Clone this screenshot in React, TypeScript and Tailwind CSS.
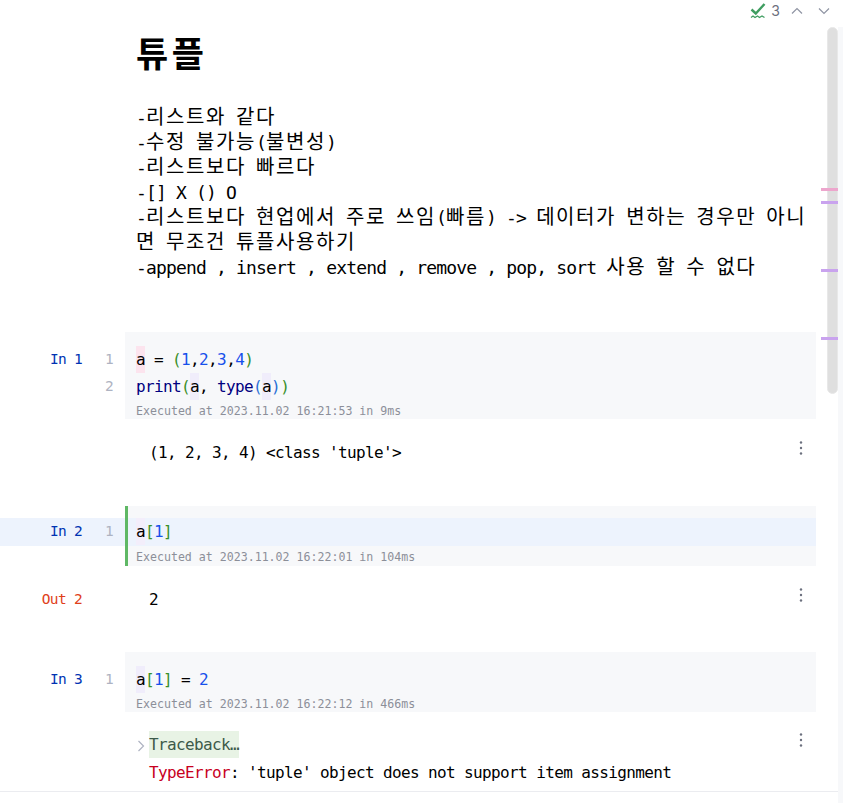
const code = "font-['DejaVu_Sans_Mono','Noto_Sans_CJK_KR',monospace]";
const src = `text-[16px] tracking-[-0.63px] leading-[27px] ${code}`;

function Kebab() {
  return (
    <svg width="4" height="16" viewBox="0 0 4 16" className="block">
      <circle cx="2" cy="2.5" r="1.2" fill="#6c707e" />
      <circle cx="2" cy="8" r="1.2" fill="#6c707e" />
      <circle cx="2" cy="13.5" r="1.2" fill="#6c707e" />
    </svg>
  );
}

function Toolbar() {
  return (
    <div className="h-[27px] flex items-center justify-end pr-[12px] pb-[6px]">
      <svg width="17" height="17" viewBox="0 0 17 17">
        <path d="M1.5 7.5 L5.8 11.5 L14.5 2" fill="none" stroke="#3f9d60" strokeWidth="2.4" />
        <path d="M1 15.5 L3 14 L5 15.5 L7.5 14 L9.5 15.5 L12 14 L14.5 15.5" fill="none" stroke="#3f9d60" strokeWidth="1.2" />
      </svg>
      <span className="ml-[4px] mr-[10px] font-['Inter',sans-serif] text-[14px] text-[#6c707e]">3</span>
      <svg width="14" height="14" viewBox="0 0 14 14" className="mr-[13px]">
        <path d="M2 9.5 L7 4.5 L12 9.5" fill="none" stroke="#8f94a3" strokeWidth="1.2" />
      </svg>
      <svg width="14" height="14" viewBox="0 0 14 14">
        <path d="M2 4.5 L7 9.5 L12 4.5" fill="none" stroke="#8f94a3" strokeWidth="1.2" />
      </svg>
    </div>
  );
}

function Gutter({ label, nums }: { label: string; nums: number[] }) {
  return (
    <div className={`w-[125px] shrink-0 flex text-[14.5px] tracking-[-0.7px] leading-[27px] ${code}`}>
      <span className="w-[82px] text-right text-[#0033b3]">{label}</span>
      <div className="w-[31px] text-right text-[#aeb3c2]">
        {nums.map((n) => (
          <div key={n}>{n}</div>
        ))}
      </div>
    </div>
  );
}

function Executed({ text }: { text: string }) {
  return <div className={`mt-[3px] text-[11.6px] leading-[16px] text-[#8c8f99] ${code}`}>{text}</div>;
}

function Output({ children, className }: { children: React.ReactNode; className?: string }) {
  return (
    <div className={`flex justify-between mr-[27px] ml-[149px] ${className ?? ""}`}>
      <div className={`text-black ${src}`}>{children}</div>
      <div className="mr-[13px] pt-px">
        <Kebab />
      </div>
    </div>
  );
}

const Num = ({ children }: { children: React.ReactNode }) => <span className="text-[#1750eb]">{children}</span>;
const Br = ({ children, c }: { children: React.ReactNode; c: string }) => <span style={{ color: c }}>{children}</span>;
const Hl = ({ children, bg }: { children: React.ReactNode; bg: string }) => (
  <span className="inline-block h-[27px]" style={{ backgroundColor: bg }}>
    {children}
  </span>
);

// hangul takes two latin cells in the notebook font
function Line({ text }: { text: string }) {
  const parts = text.split(/([\uac00-\ud7a3]+)/);
  return (
    <p className="h-[25px] whitespace-nowrap">
      {parts.map((part, i) =>
        i % 2 === 1 ? (
          <span key={i} className="text-[20px] tracking-[1.6px]">
            {part}
          </span>
        ) : (
          <span key={i} className="tracking-[-0.83px]">
            {part}
          </span>
        ),
      )}
    </p>
  );
}

export default function App() {
  const green = "#3a8f2a";
  const blue = "#2a6fd6";
  return (
    <div className="relative w-[843px] h-[803px] overflow-hidden bg-white">
      <Toolbar />

      {/* markdown cell */}
      <div className="ml-[136px] mr-[37px] text-black">
        <h1 className={`h-[46px] mt-[5px] text-[35px] leading-[46px] font-bold tracking-[3.5px] ${code}`}>튜플</h1>
        <div className={`mt-[27px] text-[18px] leading-[25px] ${code}`}>
          <Line text="-리스트와 같다" />
          <Line text="-수정 불가능(불변성)" />
          <Line text="-리스트보다 빠르다" />
          <Line text="-[] X () O" />
          <Line text="-리스트보다 현업에서 주로 쓰임(빠름) -> 데이터가 변하는 경우만 아니" />
          <Line text="면 무조건 튜플사용하기" />
          <Line text="-append , insert , extend , remove , pop, sort 사용 할 수 없다" />
        </div>
      </div>

      {/* cell 1 */}
      <div className="flex mt-[52px] pr-[27px]">
        <div className="pt-[14px]">
          <Gutter label="In 1" nums={[1, 2]} />
        </div>
        <div className="flex-1 bg-[#f7f8fa] pl-[11px] pt-[14px] h-[87px]">
          <div className={`text-black ${src}`}>
            <div className="h-[27px]">
              <Hl bg="#fce4ee">a</Hl> = <Br c={green}>(</Br>
              <Num>1</Num>,<Num>2</Num>,<Num>3</Num>,<Num>4</Num>
              <Br c={green}>)</Br>
            </div>
            <div className="h-[27px]">
              <span className="text-[#000080]">print</span>
              <Br c={green}>(</Br>
              <Hl bg="#f0edfb">a</Hl>, <span className="text-[#000080]">type</span>
              <Br c={blue}>(</Br>
              <Hl bg="#f0edfb">a</Hl>
              <Br c={blue}>)</Br>
              <Br c={green}>)</Br>
            </div>
          </div>
          <Executed text="Executed at 2023.11.02 16:21:53 in 9ms" />
        </div>
      </div>
      <Output className="mt-[20px]">(1, 2, 3, 4) &lt;class 'tuple'&gt;</Output>

      {/* cell 2, the line with the caret */}
      <div className="flex mt-[40px] pr-[27px] relative">
        <div className="flex-1 flex">
          <div className="w-[125px] shrink-0" />
          <div className="flex-1 bg-[#f7f8fa] h-[60px]" />
        </div>
        <div className="absolute left-0 right-[27px] top-[12px] h-[28px] bg-[#edf3fd]" />
        <div className="absolute left-[125px] top-0 w-[3px] h-[60px] bg-[#5fb865]" />
        <div className="absolute left-0 top-[12px] right-[27px] flex">
          <Gutter label="In 2" nums={[1]} />
          <div className="pl-[11px]">
            <div className={`h-[28px] text-black ${src}`}>
              <Hl bg="#f3eefb">a</Hl>
              <Br c={green}>[</Br>
              <Num>1</Num>
              <Br c={green}>]</Br>
            </div>
            <Executed text="Executed at 2023.11.02 16:22:01 in 104ms" />
          </div>
        </div>
      </div>
      <div className="relative">
        <div className={`absolute left-0 w-[82px] top-[20px] text-right text-[14.5px] tracking-[-0.7px] leading-[27px] text-[#e0401a] ${code}`}>Out 2</div>
        <div className="h-px" />
        <Output className="mt-[19px]">2</Output>
      </div>

      {/* cell 3 */}
      <div className="flex mt-[39px] pr-[27px]">
        <div className="pt-[14px]">
          <Gutter label="In 3" nums={[1]} />
        </div>
        <div className="flex-1 bg-[#f7f8fa] pl-[11px] pt-[14px] h-[60px]">
          <div className={`text-black ${src}`}>
            <div className="h-[27px]">
              <Hl bg="#f0edfb">a</Hl>
              <Br c={green}>[</Br>
              <Num>1</Num>
              <Br c={green}>]</Br> = <Num>2</Num>
            </div>
          </div>
          <Executed text="Executed at 2023.11.02 16:22:12 in 466ms" />
        </div>
      </div>
      <Output className="mt-[19px]">
        <div className="relative">
          <svg width="8" height="12" viewBox="0 0 8 12" className="absolute left-[-12px] top-[9px]">
            <path d="M1.5 1 L6.5 6 L1.5 11" fill="none" stroke="#aeb3c2" strokeWidth="1.2" />
          </svg>
          <span className="block w-fit bg-[#e8f3e5] text-[#3d5a4a]">Traceback…</span>
        </div>
        <div className="mt-px">
          <span className="text-[#c8001e]">TypeError</span>: 'tuple' object does not support item assignment
        </div>
      </Output>
      <div className="mt-[5px] h-px bg-[#ebecf0]" />

      {/* scrollbar overlay */}
      <div className="absolute right-0 top-[27px] w-[5px] h-[776px] bg-[#f7f8fa]" />
      <div className="absolute left-[827px] top-[27px] w-[11px] h-[367px] rounded-full bg-[#dfdfdf] border border-[#e8e8e8]" />
      <div className="absolute left-[821px] top-[188px] w-[17px] h-[3px] bg-[#eda6cd]" />
      <div className="absolute left-[821px] top-[201px] w-[17px] h-[3px] bg-[#c9a3ee]" />
      <div className="absolute left-[821px] top-[269px] w-[17px] h-[3px] bg-[#c9a3ee]" />
      <div className="absolute left-[821px] top-[337px] w-[17px] h-[3px] bg-[#c9a3ee]" />
    </div>
  );
}
